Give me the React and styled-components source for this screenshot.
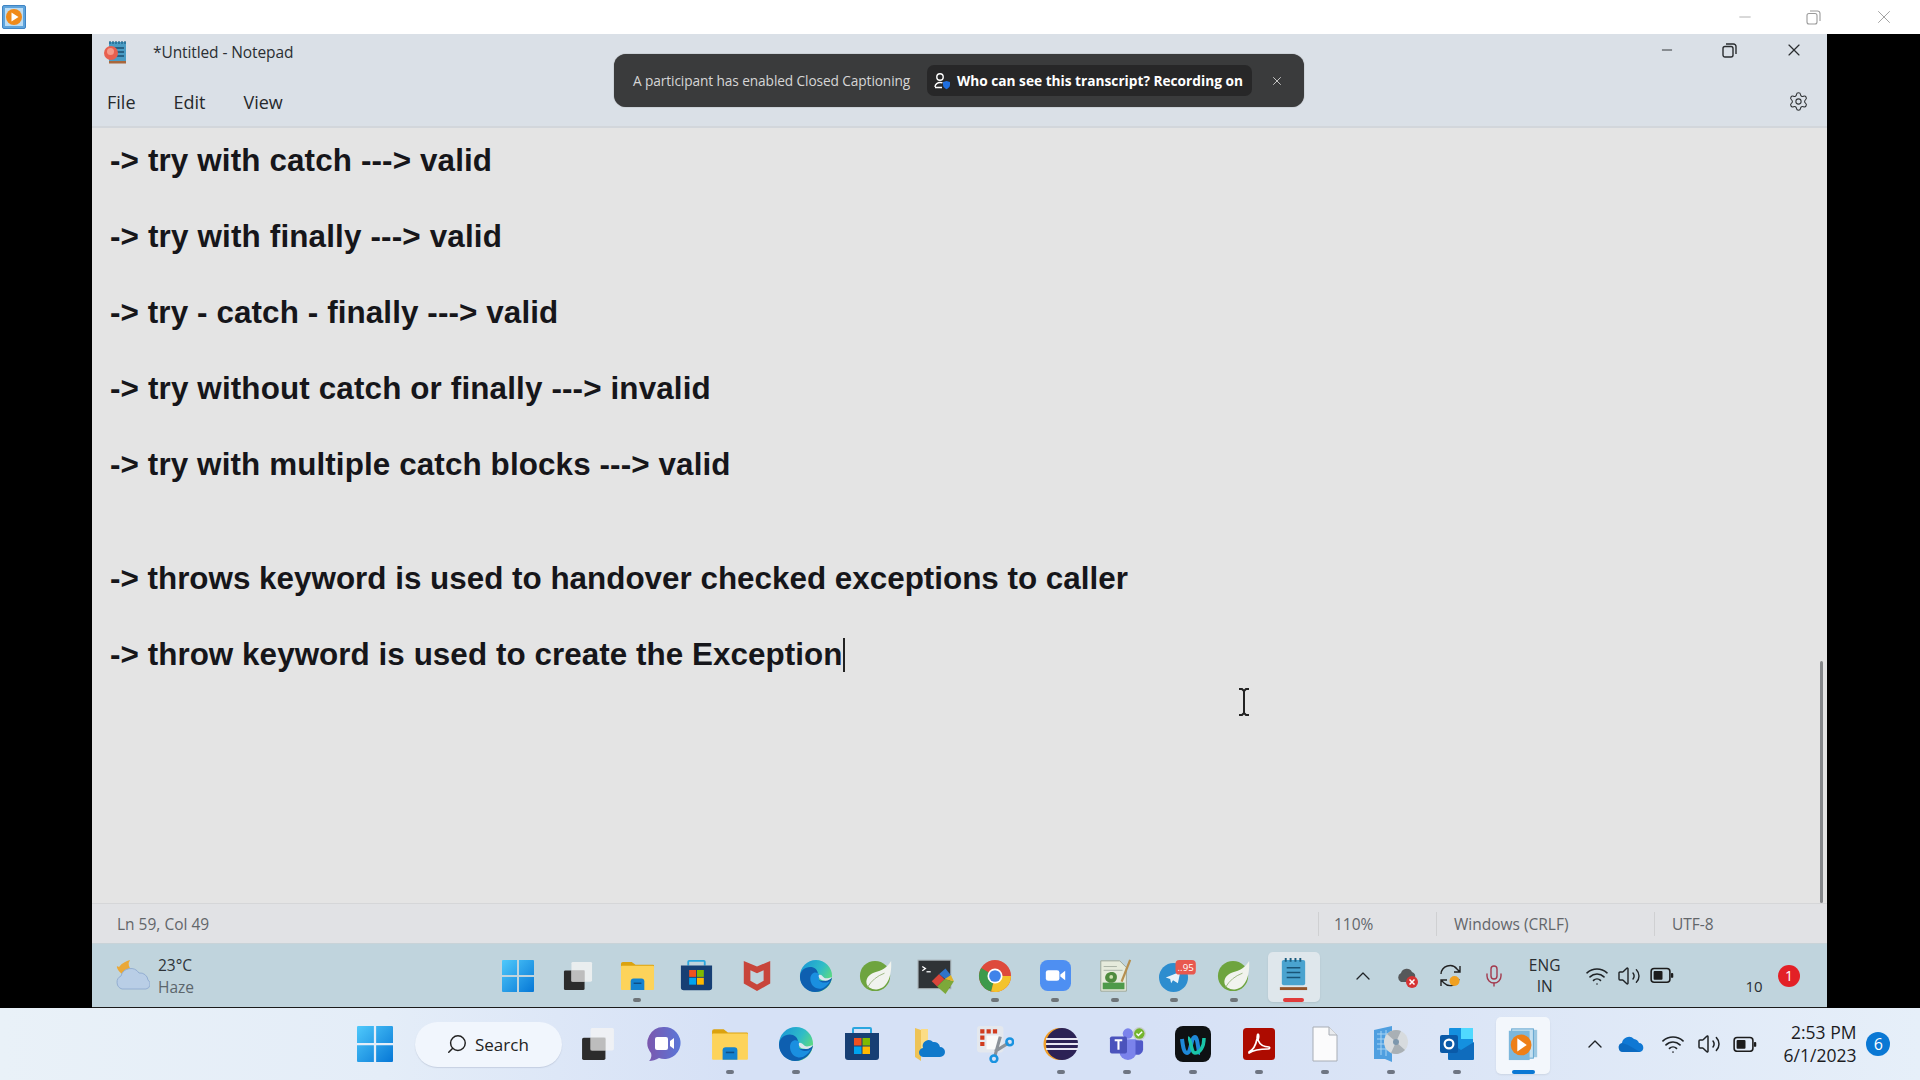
import React from 'react';
import styled, { createGlobalStyle } from 'styled-components';
import { Settings, Wifi, Volume2, ChevronUp, Mic, X, Minus, Search } from 'lucide-react';

const Global = createGlobalStyle`
  html, body { margin: 0; padding: 0; background: #000; }
  body { font-family: "Open Sans", "Noto Sans", "Liberation Sans", sans-serif; }
  * { box-sizing: border-box; }
`;

const Page = styled.div`
  width: 1920px; height: 1080px; display: flex; flex-direction: column; overflow: hidden; position: relative; background: #000;
`;
const PlayerBar = styled.header`
  height: 34px; flex: none; background: #fff; display: flex; align-items: center; justify-content: space-between; padding-left: 2px;
`;
const WinControls = styled.div`
  display: flex; align-items: center; gap: ${p => p.$gap}px; padding-right: ${p => p.$pad}px; color: ${p => p.$color};
  margin-bottom: ${p => p.$lift || 0}px;
`;
const Stage = styled.main`
  height: 974px; flex: none; padding: 0 93px 0 92px; background: #000; display: flex;
`;
const Notepad = styled.section`
  flex: 1; display: flex; flex-direction: column; position: relative; min-width: 0;
`;
const Head = styled.div`
  height: 94px; flex: none; background: #dae0e7; border-bottom: 2px solid #d2d6db; display: flex; flex-direction: column;
`;
const TitleRow = styled.div`
  height: 36px; flex: none; display: flex; align-items: center; justify-content: space-between; padding: 0 23px 0 10px;
`;
const TitleLeft = styled.div`
  display: flex; align-items: center; gap: 25px;
`;
const TitleText = styled.span`
  font-size: 15.5px; color: #2b2f33; letter-spacing: -0.1px;
`;
const MenuRow = styled.nav`
  flex: 1; display: flex; align-items: center; justify-content: space-between; padding: 8px 18px 0 15px;
`;
const Menus = styled.div`
  display: flex; gap: 38px;
`;
const MenuItem = styled.span`
  font-size: 18px; color: #26292c;
`;
const Gear = styled(Settings)`
  margin-bottom: 1px; color: #2f3235;
`;
const Toast = styled.div`
  position: absolute; left: 522px; top: 20px; width: 690px; height: 53px; border-radius: 12px; background: #3a3b3c;
  display: flex; align-items: center; padding-left: 19px; color: #d6d6d6; box-shadow: 0 0 1px #555;
`;
const ToastText = styled.span`
  font-size: 13.7px; width: 294px; white-space: nowrap; letter-spacing: -0.1px;
`;
const ToastPill = styled.div`
  width: 325px; height: 31px; border-radius: 7px; background: #272728; display: flex; align-items: center; gap: 6px; padding-left: 6px;
  color: #fff; font-size: 13.7px; font-weight: 700; white-space: nowrap;
`;
const ToastClose = styled.span`
  display: flex; margin-left: 18px; color: #d8d8d8;
`;
const Editor = styled.div`
  flex: 1; background: #e4e4e4; padding: 14px 0 0 18px; position: relative; min-height: 0;
  font-family: "Liberation Sans", Arial, sans-serif; font-weight: 700; font-size: 31.4px; color: #16161a;
`;
const Line = styled.div`
  height: 38px; line-height: 38px; white-space: nowrap; margin-bottom: ${p => p.$gap}px; display: flex; align-items: center;
  letter-spacing: ${p => p.$track}px;
`;
const Caret = styled.span`
  display: inline-block; width: 2px; height: 34px; background: #222; margin-left: 1px;
`;
const Scroll = styled.div`
  position: absolute; right: 4px; bottom: 0; width: 3px; height: 242px; background: #85878a; border-radius: 2px;
`;
const IBeam = styled.div`
  position: absolute; left: 1145px; top: 559px; width: 14px; height: 30px; color: #222;
`;
const Status = styled.div`
  height: 41px; flex: none; background: #e1e2e5; border-top: 1px solid #d5d6d8; border-bottom: 1px solid #c8d3d8; display: flex; align-items: center;
  font-size: 15.5px; color: #63666a;
`;
const StatusCell = styled.span`
  width: ${p => p.$w}px; height: 24px; line-height: 24px; padding-left: ${p => p.$pad}px; flex: none; white-space: nowrap;
  border-left: ${p => p.$sep ? '1px solid #cfd0d2' : 'none'};
`;
const InnerBar = styled.div`
  height: 64px; flex: none; background: #c0d4dd; display: flex; align-items: center; border-bottom: 1px solid #1b1b1b; color: #222;
`;
const Weather = styled.div`
  width: 396px; flex: none; display: flex; align-items: center; gap: 8px; padding-left: 22px;
`;
const WeatherText = styled.div`
  display: flex; flex-direction: column; font-size: 15.5px; line-height: 22px; color: #2d3338;
`;
const Haze = styled.span` color: #5c666c; `;
const Slots = styled.div`
  display: flex; align-items: center; height: 100%; flex: none; margin: 0 ${p => p.$after}px 0 ${p => p.$before}px;
`;
const Slot = styled.div`
  width: ${p => p.$w}px; height: 100%; flex: none; position: relative; display: flex; align-items: center; justify-content: center;
`;
const Tile = styled.div`
  position: absolute; left: ${p => p.$inset}px; right: ${p => p.$inset}px; top: ${p => p.$top}px; bottom: ${p => p.$bottom}px;
  background: ${p => p.$bg}; border-radius: 5px; box-shadow: 0 1px 2px rgba(0,0,0,.08);
`;
const IconWrap = styled.div`
  position: relative; display: flex; transform: translateY(${p => p.$up}px);
`;
const Dot = styled.span`
  position: absolute; left: 50%; bottom: ${p => p.$b}px; width: ${p => p.$w}px; height: 4px; margin-left: ${p => -p.$w / 2}px; border-radius: 2px; background: ${p => p.$c};
`;
const TraySlot = styled.div`
  width: ${p => p.$w}px; flex: none; display: flex; justify-content: center; align-items: center; color: ${p => p.$c || '#1f2326'};
`;
const Eng = styled.div`
  display: flex; flex-direction: column; align-items: center; font-size: 15.5px; line-height: 21px; color: #2a2e31;
`;
const Spring = styled.div` flex: 1; `;
const Ten = styled.span` font-size: 15px; color: #2a2e31; padding-top: 21px; `;
const Badge = styled.span`
  width: ${p => p.$s}px; height: ${p => p.$s}px; border-radius: 50%; background: ${p => p.$bg}; color: #fff; display: flex; align-items: center; justify-content: center;
  font-size: ${p => p.$f}px; flex: none;
`;
const OuterBar = styled.footer`
  height: 72px; flex: none; display: flex; align-items: center; color: #1b1b1f;
  background: linear-gradient(90deg, #e9f1f8 0%, #e4edf8 20%, #d6e1f6 38%, #d6e1f6 60%, #dbe5f6 75%, #e6eff9 100%);
`;
const OuterLeft = styled.div` width: 342px; flex: none; `;
const SearchBox = styled.div`
  width: 147px; height: 45px; flex: none; margin-left: 7px; border-radius: 23px; background: #f1f6fd; box-shadow: 0 1px 1px rgba(120,130,160,.25);
  display: flex; align-items: center; gap: 7px; padding-left: 31px; font-size: 17px; color: #222;
`;
const SearchGlyph = styled(Search)`
  transform: scaleX(-1);
`;
const Clock = styled.div`
  width: 87px; flex: none; display: flex; flex-direction: column; align-items: flex-end; font-size: 17.5px; line-height: 23px; color: #1c1c1f; white-space: nowrap;
`;

const Restore = ({ s = 15, w = 1.4 }) => (
  <svg width={s} height={s} viewBox="0 0 15 15" fill="none" stroke="currentColor" strokeWidth={w}><rect x="1" y="3.500" width="10" height="10.500" rx="2" /><path d="M4 1h7.500a2.500 2.500 0 0 1 2.500 2.500V11" /></svg>
);
const PlayerSmall = () => (
  <svg width="24" height="24" viewBox="0 0 24 24"><rect x="0.500" y="0.500" width="23" height="23" rx="1.500" fill="#5fa4dc" stroke="#3f84c4" /><rect x="3" y="3" width="18" height="18" fill="#bcdcf3" /><circle cx="12" cy="12" r="8" fill="#f08a1a" /><path d="M9.500 7.500l7 4.500-7 4.500z" fill="#fff" /></svg>
);
const TitleIcon = () => (
  <svg width="26" height="26" viewBox="0 0 26 26"><rect x="7" y="3" width="17" height="21" fill="#4a9cc4" /><path d="M8 2v3M11 2v3M14 2v3M17 2v3M20 2v3M23 2v3" stroke="#1d5f86" strokeWidth="1.200" /><path d="M12 9h10M12 13h10M12 17h10" stroke="#1c4f70" strokeWidth="1.400" /><rect x="7" y="22" width="17" height="2.500" fill="#a8673c" /><circle cx="9" cy="14" r="7" fill="#e8604f" /><circle cx="8.500" cy="12.500" r="3.500" fill="#f59a8a" /></svg>
);
const StartIcon = ({ s }) => (
  <svg width={s} height={s} viewBox="0 0 32 32"><defs><linearGradient id={`st${s}`} x1="0" y1="0" x2="1" y2="1"><stop offset="0" stopColor="#4fc9fb" /><stop offset="1" stopColor="#0677d6" /></linearGradient></defs><path d="M0 1a1 1 0 0 1 1-1h14v15H0zM17 0h14a1 1 0 0 1 1 1v14H17zM0 17h15v15H1a1 1 0 0 1-1-1zM17 17h15v14a1 1 0 0 1-1 1H17z" fill={`url(#st${s})`} /></svg>
);
const TaskView = ({ s }) => (
  <svg width={s} height={s} viewBox="0 0 32 32"><rect x="1" y="10" width="22" height="21" rx="1.500" fill="#2c2c2c" /><rect x="9" y="1" width="22" height="21" rx="1.500" fill="#f4f4f4" fillOpacity=".8" /><rect x="9" y="10" width="14" height="12" fill="#bdbdbd" /></svg>
);
const Folder = ({ s }) => (
  <svg width={s} height={s} viewBox="0 0 36 36"><path d="M1 6a2 2 0 0 1 2-2h9l4 3h18a1 1 0 0 1 1 1v3H1z" fill="#dba20f" /><rect x="1" y="8" width="34" height="25" rx="1" fill="#fdd35a" /><path d="M11 33v-9a3 3 0 0 1 3-3h8a3 3 0 0 1 3 3v9z" fill="#1483cf" /><path d="M14 26h8" stroke="#0c4f87" strokeWidth="1.500" /></svg>
);
const Store = ({ s }) => (
  <svg width={s} height={s} viewBox="0 0 36 36"><path d="M9 7V3a1 1 0 0 1 1-1h16a1 1 0 0 1 1 1v4" fill="none" stroke="#2aa6df" strokeWidth="2" /><path d="M1 7h34v24a3 3 0 0 1-3 3H4a3 3 0 0 1-3-3z" fill="#173f74" /><rect x="10" y="12" width="7.500" height="7.500" fill="#f0511f" /><rect x="18.500" y="12" width="7.500" height="7.500" fill="#7fba00" /><rect x="10" y="20.500" width="7.500" height="7.500" fill="#00a4ef" /><rect x="18.500" y="20.500" width="7.500" height="7.500" fill="#ffb900" /></svg>
);
const McAfee = ({ s }) => (
  <svg width={s} height={s} viewBox="0 0 32 36"><path d="M2 2l14 6 14-6v24L16 34 2 26z" fill="#c8453b" /><path d="M9 12l7 3 7-3v11l-7 4-7-4z" fill="#c0d4dd" /></svg>
);
const Edge = ({ s }) => (
  <svg width={s} height={s} viewBox="0 0 36 36"><defs><linearGradient id={`ed${s}`} x1="0" y1="0" x2="1" y2=".6"><stop offset="0" stopColor="#1793d8" /><stop offset=".6" stopColor="#2fbcc7" /><stop offset="1" stopColor="#63dd78" /></linearGradient></defs><circle cx="18" cy="18" r="17" fill={`url(#ed${s})`} /><path d="M1 19c0-8 8-12 14-10 5 2 6 7 4 10-1 2 2 4 6 4 4 0 8-1 10-4-1 9-9 16-18 16C9 35 1 28 1 19z" fill="#0e5fb0" /><path d="M12 21c0-5 4-8 8-6 2 1 2 3 1 5-1 3 3 5 7 5 2 0 4-1 5-2-3 6-9 10-14 8-4-1-7-5-7-10z" fill="#1a8fe0" /><path d="M21 17c3-1 4 2 6 3 2 1 5 0 8-1-1 2-4 4-7 4-5 0-8-3-7-6z" fill="#dbe6ee" /></svg>
);
const Leaf = ({ s }) => (
  <svg width={s} height={s} viewBox="0 0 34 36"><circle cx="16" cy="18" r="16" fill="#6ea43f" /><path d="M33 2c1 14-3 28-14 30-6 1-11-2-12-6-1-6 3-10 9-12 7-2 13-5 17-12z" fill="#f1f3ee" /><path d="M8 30c4-7 10-12 18-15" stroke="#9ab57d" strokeWidth="1" fill="none" /></svg>
);
const Puzzle = ({ s }) => (
  <svg width={s} height={s} viewBox="0 0 36 36"><rect x="1" y="3" width="31" height="27" fill="#2f3336" stroke="#a6b0b4" /><path d="M5 9l3 2-3 2" stroke="#fff" fill="none" strokeWidth="1.200" /><path d="M9 14h4" stroke="#fff" strokeWidth="1.200" /><path d="M14 23l7-7 5 5-7 7z" fill="#d9453a" /><path d="M21 16l6-5 5 6-5 4z" fill="#2f74c8" /><path d="M19 28l7-7 9 2-8 12z" fill="#7da83a" /><path d="M26 21l6-4 3 6z" fill="#e2b32a" /></svg>
);
const Chrome = ({ s }) => (
  <svg width={s} height={s} viewBox="0 0 36 36"><circle cx="18" cy="18" r="17" fill="#de4a3c" /><path d="M18 18L3.300 9.500A17 17 0 0 0 14 34.500z" fill="#3d9a4a" /><path d="M18 18h17A17 17 0 0 1 14 34.500z" fill="#f3c32c" /><circle cx="18" cy="18" r="8" fill="#fff" /><circle cx="18" cy="18" r="6.200" fill="#3f83ea" /></svg>
);
const ZoomApp = ({ s }) => (
  <svg width={s} height={s} viewBox="0 0 32 32"><rect x="0" y="0" width="32" height="32" rx="8" fill="#4e8ff2" /><rect x="6" y="10.500" width="14" height="11" rx="2.500" fill="#fff" /><path d="M21 15l5-4v10l-5-4z" fill="#fff" /></svg>
);
const NotepadPP = ({ s }) => (
  <svg width={s} height={s} viewBox="0 0 34 38"><path d="M2 3h20l7 7v25H2z" fill="#e6ebdc" stroke="#9aa596" /><path d="M5 9h14M5 13h20" stroke="#a8b2a4" /><rect x="4" y="26" width="23" height="7" fill="#4e9a4a" /><path d="M8 17c5-4 11-2 11 3s-4 7-8 6-6-5-3-9z" fill="#4e8b3e" /><circle cx="13" cy="20" r="2" fill="#cfe2b0" /><path d="M24 25L33 2" stroke="#b58f4f" strokeWidth="2.400" /></svg>
);
const Telegram = ({ s }) => (
  <svg width={s + 16} height={s} viewBox="-8 0 48 32" style={{ overflow: 'visible' }}><circle cx="15" cy="18" r="15" fill="#2d8dcf" /><path d="M7 18l15-6-2.500 12-5-3-2 3-1-4.500z" fill="#e8f2f8" /><rect x="17" y="0" width="21" height="15" rx="4" fill="#e8584f" /><text x="27.500" y="11.500" fontSize="10" fill="#fff" textAnchor="middle" fontFamily="Open Sans">..95</text></svg>
);
const NoteBlue = ({ s }) => (
  <svg width={s} height={s} viewBox="0 0 30 36"><rect x="3" y="3" width="24" height="26" rx="2" fill="#4aa3cf" /><path d="M7 1v4M12 1v4M17 1v4M22 1v4" stroke="#1b5c7f" strokeWidth="2" /><path d="M8 11h14M8 16h14M8 21h14" stroke="#195477" strokeWidth="1.600" /><rect x="1" y="31" width="28" height="3" fill="#94542a" /></svg>
);
const Meet = ({ s }) => (
  <svg width={s} height={s} viewBox="0 0 34 36"><defs><linearGradient id="mt" x1="0" y1="0" x2="1" y2="0"><stop offset="0" stopColor="#7b57ad" /><stop offset="1" stopColor="#5a76d8" /></linearGradient></defs><path d="M17 1a16 16 0 1 1-5 31c-3 2-7 3-10 3 2-2 3-5 2-8A16 16 0 0 1 17 1z" fill="url(#mt)" /><rect x="8" y="11" width="13" height="13" rx="2" fill="#fff" /><path d="M23 15l4-3v11l-4-3z" fill="#fff" /></svg>
);
const OneFolder = ({ s }) => (
  <svg width={s} height={s} viewBox="0 0 32 36"><path d="M2 2l6 2v31l-6-4z" fill="#eec356" /><path d="M8 3h7v22H8z" fill="#fbdc85" /><path d="M11 31a4.500 4.500 0 0 1-1-9 6 6 0 0 1 10-6 6 6 0 0 1 7 5 4.500 4.500 0 0 1 0 10z" fill="#1079cb" /></svg>
);
const Snip = ({ s }) => (
  <svg width={s} height={s} viewBox="0 0 36 36"><rect x="1" y="1" width="25" height="25" rx="3" fill="#e4e8ee" /><path d="M4 4h4v4H4zM10 4h4v4h-4zM16 4h4v4h-4zM4 10h4v4H4zM4 16h4v4H4z" fill="#d13b1e" /><rect x="10" y="10" width="13" height="13" fill="#fafafa" /><path d="M18 25L31 17M23 11l-5 18" stroke="#8c9299" strokeWidth="3" /><circle cx="32" cy="16" r="3.200" fill="none" stroke="#1a93e0" strokeWidth="2.400" /><circle cx="17" cy="32" r="3.200" fill="none" stroke="#1a93e0" strokeWidth="2.400" /></svg>
);
const Eclipse = ({ s }) => (
  <svg width={s} height={s} viewBox="0 0 36 36"><circle cx="16.500" cy="18" r="16" fill="#f09f2a" /><circle cx="19" cy="18" r="16" fill="#2c2255" /><path d="M3 13h32M3 18h32M3 23h32" stroke="#e8e6f2" strokeWidth="2" /></svg>
);
const Teams = ({ s }) => (
  <svg width={s} height={s} viewBox="0 0 38 36" style={{ overflow: 'visible' }}><circle cx="20" cy="7" r="5.500" fill="#7b83eb" /><path d="M11 13h18v13a9 9 0 0 1-18 0z" fill="#7b83eb" /><path d="M28 14h6a2 2 0 0 1 2 2v8a6 6 0 0 1-8 5z" fill="#5059c9" /><rect x="1" y="10" width="18" height="18" rx="2" fill="#4b53bc" /><path d="M6 14h8M10 14v10" stroke="#fff" strokeWidth="2.200" /><circle cx="32" cy="7" r="7" fill="#c9cdd0" /><circle cx="32" cy="7" r="5.500" fill="#73b52d" /><path d="M29 7l2 2 4-4" stroke="#fff" strokeWidth="1.600" fill="none" /></svg>
);
const Webex = ({ s }) => (
  <svg width={s} height={s} viewBox="0 0 36 36"><rect width="36" height="36" rx="8" fill="#0e1113" /><path d="M7 13c1 8 2 14 5 14 4 0 4-16 8-16 3 0 3 16 5 16" fill="none" stroke="#1e88d8" strokeWidth="4" /><path d="M13 12c3 0 3 15 7 15 5 0 9-6 9-15" fill="none" stroke="#19c5a8" strokeWidth="3.500" /></svg>
);
const Acrobat = ({ s }) => (
  <svg width={s} height={s} viewBox="0 0 32 32"><rect width="32" height="32" rx="3.500" fill="#ad0b00" /><path d="M6 24c4-2 7-8 8-13 .5-3 0-5 1-5s1 3 0 6c2 5 5 7 11 7 1 0 1 2-1 2-6 0-13 0-19 4z" fill="none" stroke="#fff" strokeWidth="1.700" strokeLinejoin="round" /></svg>
);
const Blank = ({ s }) => (
  <svg width={s} height={s} viewBox="0 0 28 36"><path d="M2 1h16l8 8v26H2z" fill="#fbfbfc" stroke="#a8adb5" /><path d="M18 1v8h8" fill="#e9ebee" stroke="#a8adb5" /></svg>
);
const DiscApp = ({ s }) => (
  <svg width={s} height={s} viewBox="0 0 36 38"><path d="M1 5l18-4v36l-7-3H1z" fill="#4f9fe0" /><path d="M4 9h12M4 14h12M4 19h12M4 24h12M8 6v24M13 5v26" stroke="#a8d4f4" strokeWidth="1" /><circle cx="23" cy="17" r="12" fill="#d7dbde" /><path d="M23 17L14 9a12 12 0 0 1 14-3zM23 17l9 8a12 12 0 0 1-14 3z" fill="#a9b0b5" /><circle cx="23" cy="17" r="3" fill="#7d97ad" /></svg>
);
const Outlook = ({ s }) => (
  <svg width={s} height={s} viewBox="0 0 36 36"><rect x="10" y="2" width="24" height="22" rx="1" fill="#1490df" /><rect x="22" y="2" width="12" height="11" fill="#50d9ff" /><path d="M9 16l13 8 13-8v17a1 1 0 0 1-1 1H10a1 1 0 0 1-1-1z" fill="#0f6cbd" /><rect x="1" y="9" width="18" height="18" rx="2" fill="#0a5aa8" /><circle cx="10" cy="18" r="4.400" fill="none" stroke="#fff" strokeWidth="2.200" /></svg>
);
const Player = ({ s }) => (
  <svg width={s} height={s} viewBox="0 0 32 36"><rect x="8" y="3" width="23" height="29" fill="#9ec9e2" /><rect x="4" y="2" width="23" height="31" fill="#c5e0f0" stroke="#5fa4d0" /><rect x="1" y="4" width="22" height="31" fill="#7cb7dc" /><circle cx="14" cy="19" r="11" fill="#ee7f17" /><path d="M10 12l10 7-10 7z" fill="#fff" /></svg>
);
const Cloud = () => (
  <svg width="36" height="34" viewBox="0 0 36 34"><path d="M16 1a7 7 0 0 0 2 10c-3-1-8 0-10 4C3 11 1 5 5 8c3-4 7-6 11-7z" fill="#eaa838" /><path d="M8 30a7 7 0 0 1-1-13 10 10 0 0 1 18-3 8 8 0 0 1 9 7 5 5 0 0 1-2 9z" fill="#b9cee6" stroke="#93aed2" /></svg>
);
const TrayCloudX = () => (
  <svg width="24" height="24" viewBox="0 0 24 24"><path d="M6 18a5 5 0 0 1 0-9 6 6 0 0 1 11-1 5 5 0 0 1 3 6v4z" fill="#56585a" /><circle cx="17" cy="18" r="6" fill="#d63333" /><path d="M14.500 15.500l5 5M19.500 15.500l-5 5" stroke="#fff" strokeWidth="1.500" /></svg>
);
const TraySync = () => (
  <svg width="26" height="26" viewBox="0 0 26 26" fill="none" stroke="#222" strokeWidth="1.400"><path d="M3 11a9 9 0 0 1 16-5l3 3M22 3v6h-6" /><path d="M21 16a9 9 0 0 1-15 4l-3-3M3 23v-6h6" /><circle cx="16.500" cy="18" r="5" fill="#f0a020" stroke="none" /></svg>
);
const Battery = ({ s = 24 }) => (
  <svg width={s} height={s * 0.7} viewBox="0 0 24 17"><rect x="1" y="1.500" width="19" height="14" rx="3" fill="none" stroke="#1c1c1c" strokeWidth="1.600" /><rect x="3.500" y="4" width="9" height="9" rx="1" fill="#1c1c1c" /><rect x="21" y="6" width="2.400" height="5" rx="1" fill="#1c1c1c" /></svg>
);
const OneDrive = () => (
  <svg width="26" height="18" viewBox="0 0 26 18"><path d="M5 17a4.600 4.600 0 0 1-1-9 7 7 0 0 1 12-4 6 6 0 0 1 5 4 4.600 4.600 0 0 1 1 9z" fill="#0f78d4" /><path d="M5 17a4.600 4.600 0 0 1-1-9l6 2 12 7z" fill="#0a5fb0" opacity=".55" /></svg>
);
const PersonShield = () => (
  <svg width="18" height="18" viewBox="0 0 18 18" fill="none" stroke="#fff" strokeWidth="1.400"><circle cx="7" cy="5" r="3.200" /><path d="M2 15c0-3 3-4.500 5-4.500 1 0 2 .2 2.500.5M2 15.500h7" /><path d="M10 10l3.500-1 3.500 1v3c0 2-2 3.500-3.500 4.300C12 16.500 10 15 10 13z" fill="#1f6fe0" stroke="none" /></svg>
);
const CursorBeam = () => (
  <svg width="14" height="30" viewBox="0 0 14 30" fill="none" stroke="#222" strokeWidth="2"><path d="M2 2h3l2 2 2-2h3M7 4v22M2 28h3l2-2 2 2h3" /></svg>
);

const lines = [
  ['-> try with catch ---> valid', 38, 0.13],
  ['-> try with finally ---> valid', 38, 0.16],
  ['-> try - catch - finally ---> valid', 38, 0.1],
  ['-> try without catch or finally ---> invalid', 38, 0.14],
  ['-> try with multiple catch blocks ---> valid', 76, 0.11],
  ['-> throws keyword is used to handover checked exceptions to caller', 38, 0],
];

const innerApps = [
  { I: StartIcon, s: 32 }, { I: TaskView, s: 30 }, { I: Folder, s: 35, d: 1 }, { I: Store, s: 33 }, { I: McAfee, s: 34 },
  { I: Edge, s: 34 }, { I: Leaf, s: 34 }, { I: Puzzle, s: 38 }, { I: Chrome, s: 34, d: 1 }, { I: ZoomApp, s: 31, d: 1 },
  { I: NotepadPP, s: 36, d: 1 }, { I: Telegram, s: 31, d: 1 }, { I: Leaf, s: 34, d: 1 },
];
const outerApps = [
  { I: TaskView, s: 34 }, { I: Meet, s: 36 }, { I: Folder, s: 38, d: 1 }, { I: Edge, s: 36, d: 1 }, { I: Store, s: 36 },
  { I: OneFolder, s: 36 }, { I: Snip, s: 38 }, { I: Eclipse, s: 36, d: 1 }, { I: Teams, s: 36, d: 1 }, { I: Webex, s: 36, d: 1 },
  { I: Acrobat, s: 32, d: 1 }, { I: Blank, s: 36, d: 1 }, { I: DiscApp, s: 38, d: 1 }, { I: Outlook, s: 36, d: 1 },
];

export default function App() {
  return (
    <Page>
      <Global />
      <PlayerBar>
        <PlayerSmall />
        <WinControls $gap={52} $pad={25} $color="#9a9a9a">
          <Minus size={18} strokeWidth={1} />
          <Restore s={15} w={1.1} />
          <X size={22} strokeWidth={1} />
        </WinControls>
      </PlayerBar>
      <Stage>
        <Notepad>
          <Head>
            <TitleRow>
              <TitleLeft><TitleIcon /><TitleText>*Untitled - Notepad</TitleText></TitleLeft>
              <WinControls $gap={47} $pad={0} $color="#2a2d30" $lift={4}>
                <Minus size={16} strokeWidth={1.4} />
                <Restore s={15} w={1.4} />
                <X size={20} strokeWidth={1.4} />
              </WinControls>
            </TitleRow>
            <MenuRow>
              <Menus><MenuItem>File</MenuItem><MenuItem>Edit</MenuItem><MenuItem>View</MenuItem></Menus>
              <Gear size={21} strokeWidth={1.2} />
            </MenuRow>
          </Head>
          <Toast>
            <ToastText>A participant has enabled Closed Captioning</ToastText>
            <ToastPill><PersonShield />Who can see this transcript? Recording on</ToastPill>
            <ToastClose><X size={14} strokeWidth={1.5} /></ToastClose>
          </Toast>
          <Editor>
            {lines.map(([t, g, k]) => <Line key={t} $gap={g} $track={k}>{t}</Line>)}
            <Line $gap={0} $track={0.05}>-&gt; throw keyword is used to create the Exception<Caret /></Line>
            <Scroll />
            <IBeam><CursorBeam /></IBeam>
          </Editor>
          <Status>
            <StatusCell $w={1226} $pad={25}>Ln 59, Col 49</StatusCell>
            <StatusCell $w={118} $pad={15} $sep>110%</StatusCell>
            <StatusCell $w={218} $pad={17} $sep>Windows (CRLF)</StatusCell>
            <StatusCell $w={150} $pad={17} $sep>UTF-8</StatusCell>
          </Status>
          <InnerBar>
            <Weather>
              <Cloud />
              <WeatherText><span>23°C</span><Haze>Haze</Haze></WeatherText>
            </Weather>
            <Slots $before={0} $after={8}>
              {innerApps.map(({ I, s, d }, i) => (
                <Slot $w={59.7} key={i}>
                  <IconWrap $up={0}><I s={s} /></IconWrap>
                  {d && <Dot $b={5} $w={8} $c="#6e7478" />}
                </Slot>
              ))}
              <Slot $w={59.7}>
                <Tile $inset={4} $top={8} $bottom={5} $bg="#dfe7ec" />
                <IconWrap $up={-1}><NoteBlue s={35} /></IconWrap>
                <Dot $b={5} $w={21} $c="#e03b3b" />
              </Slot>
            </Slots>
            <TraySlot $w={62}><ChevronUp size={24} strokeWidth={1.3} /></TraySlot>
            <TraySlot $w={26}><TrayCloudX /></TraySlot>
            <TraySlot $w={62}><TraySync /></TraySlot>
            <TraySlot $w={24} $c="#a33b4e"><Mic size={24} strokeWidth={1.4} /></TraySlot>
            <TraySlot $w={78}><Eng><span>ENG</span><span>IN</span></Eng></TraySlot>
            <TraySlot $w={26}><Wifi size={24} strokeWidth={1.6} /></TraySlot>
            <TraySlot $w={38}><Volume2 size={24} strokeWidth={1.4} /></TraySlot>
            <TraySlot $w={28}><Battery /></TraySlot>
            <Spring />
            <TraySlot $w={46}><Ten>10</Ten></TraySlot>
            <TraySlot $w={24}><Badge $s={22} $bg="#e32026" $f={14}>1</Badge></TraySlot>
            <TraySlot $w={26} />
          </InnerBar>
        </Notepad>
      </Stage>
      <OuterBar>
        <OuterLeft />
        <Slot $w={66}><StartIcon s={36} /></Slot>
        <SearchBox><SearchGlyph size={22} strokeWidth={1.6} />Search</SearchBox>
        <Slots $before={3} $after={21}>
          {outerApps.map(({ I, s, d }, i) => (
            <Slot $w={66.1} key={i}>
              <IconWrap $up={0}><I s={s} /></IconWrap>
              {d && <Dot $b={6} $w={8} $c="#6e7582" />}
            </Slot>
          ))}
          <Slot $w={66.1}>
            <Tile $inset={6} $top={9} $bottom={6} $bg="#f3f7fc" />
            <IconWrap $up={0}><Player s={34} /></IconWrap>
            <Dot $b={6} $w={23} $c="#0a78d4" />
          </Slot>
        </Slots>
        <TraySlot $w={36}><ChevronUp size={24} strokeWidth={1.4} /></TraySlot>
        <TraySlot $w={36}><OneDrive /></TraySlot>
        <TraySlot $w={48}><Wifi size={24} strokeWidth={1.7} /></TraySlot>
        <TraySlot $w={24}><Volume2 size={24} strokeWidth={1.5} /></TraySlot>
        <TraySlot $w={48}><Battery /></TraySlot>
        <Clock><span>2:53 PM</span><span>6/1/2023</span></Clock>
        <TraySlot $w={44} $c="#fff"><Badge $s={24} $bg="#0a78d4" $f={16}>6</Badge></TraySlot>
      </OuterBar>
    </Page>
  );
}
